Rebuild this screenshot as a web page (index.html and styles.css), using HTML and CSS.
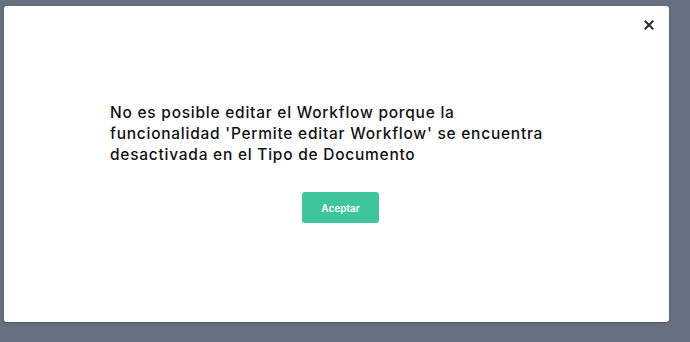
FILE: index.html
```html
<!DOCTYPE html>
<html lang="es">
<head>
  <meta charset="UTF-8" />
  <meta name="viewport" content="width=device-width, initial-scale=1.0"/>
  <title>Workflow</title>
  <link rel="stylesheet" href="styles.css">
</head>
<body>

  <!-- Modal overlay -->
  <div class="overlay">
    <div class="modal">
      <div class="modal-header">
        <button class="close-btn" aria-label="Cerrar">
          <svg width="10" height="10" viewBox="0 0 10 10">
            <path d="M1.5 1.5 L8.5 8.5 M8.5 1.5 L1.5 8.5" stroke="#333" stroke-width="2.2" stroke-linecap="square"/>
          </svg>
        </button>
      </div>
      <div class="modal-body">
        <p class="message">No es posible editar el Workflow porque la funcionalidad 'Permite editar Workflow' se encuentra desactivada en el Tipo de Documento</p>
        <div class="actions">
          <button class="accept-btn">Aceptar</button>
        </div>
      </div>
    </div>
  </div>

</body>
</html>
```

FILE: styles.css
```css
body {
  margin: 0;
  font-family: Inter, "Open Sans", sans-serif;
  background: #667080;
}
.overlay {
  height: 342px;
  padding: 6px 21px 20px 4px;
  box-sizing: border-box;
}
.modal {
  background: #fff;
  height: 100%;
  border-radius: 3px;
  box-shadow: 0 1px 3px rgba(0,0,0,0.25);
}
.modal-header {
  display: flex;
  justify-content: flex-end;
  padding: 13px 14px 0 0;
}
.close-btn {
  background: none;
  border: none;
  padding: 0;
  width: 12px;
  height: 12px;
  display: flex;
  align-items: center;
  justify-content: center;
  cursor: pointer;
}
.modal-body {
  padding: 71px 0 0 106px;
}
.message {
  margin: 0;
  width: 455px;
  font-size: 15.5px;
  font-weight: 500;
  line-height: 21px;
  color: #111;
  letter-spacing: 0.75px;
}
.actions {
  display: flex;
  padding-left: 192px;
  margin-top: 27px;
}
.accept-btn {
  background: #3ec59b;
  color: #fff;
  border: none;
  border-radius: 3px;
  width: 77px;
  height: 31px;
  font-family: inherit;
  font-size: 10px;
  font-weight: 600;
  cursor: pointer;
}
```
